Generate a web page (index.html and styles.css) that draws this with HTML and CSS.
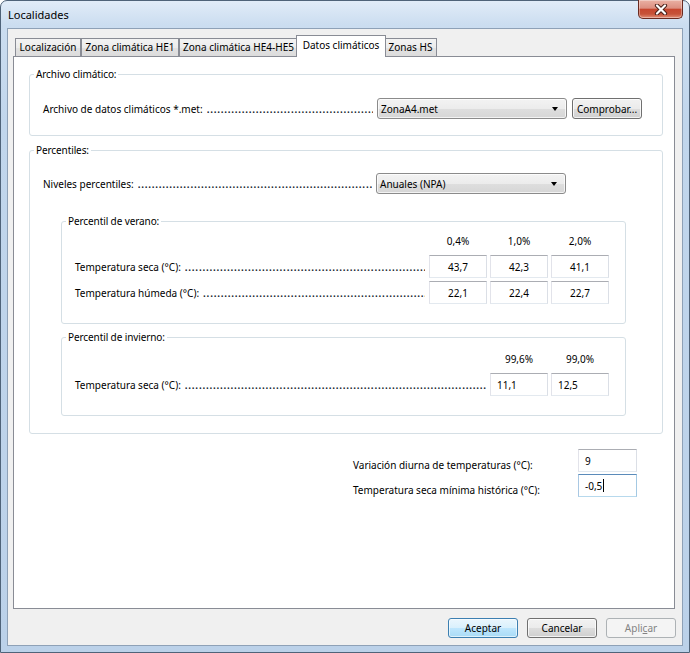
FILE: index.html
```html
<!DOCTYPE html>
<html lang="es">
<head>
<meta charset="utf-8">
<title>Localidades</title>
<link rel="stylesheet" href="styles.css">
</head>
<body>
<div class="window">
  <div class="titlebar">
    <span class="title">Localidades</span>
    <div class="close">
      <svg width="14" height="11" viewBox="0 0 14 11"><path d="M3 1.5 L11 9.5 M11 1.5 L3 9.5" stroke="#4a2019" stroke-width="4.2" stroke-linecap="round"/><path d="M3 1.5 L11 9.5 M11 1.5 L3 9.5" stroke="#ffffff" stroke-width="2.2" stroke-linecap="round"/></svg>
    </div>
  </div>
  <div class="client">
    <div class="tabs">
      <div class="tab t1">Localización</div>
      <div class="tab t2">Zona climática HE1</div>
      <div class="tab t3">Zona climática HE4-HE5</div>
      <div class="tab active t4">Datos climáticos</div>
      <div class="tab t5">Zonas HS</div>
    </div>
    <div class="panel">
      <fieldset class="group g-file">
        <legend>Archivo climático:</legend>
        <div class="group-body">
          <div class="row">
            <span class="label">Archivo de datos climáticos *.met:</span>
            <span class="leader"></span>
            <div class="combo"><span>ZonaA4.met</span><span class="arrow"></span></div>
            <div class="btn btn-check">Comprobar...</div>
          </div>
        </div>
      </fieldset>

      <fieldset class="group g-perc">
        <legend>Percentiles:</legend>
        <div class="group-body">
          <div class="row row-levels">
            <span class="label">Niveles percentiles:</span>
            <span class="leader"></span>
            <div class="combo"><span>Anuales (NPA)</span><span class="arrow"></span></div>
          </div>

          <fieldset class="subgroup sg-verano">
            <legend>Percentil de verano:</legend>
            <div class="sg-body">
              <span class="head c2">0,4%</span>
              <span class="head c3">1,0%</span>
              <span class="head c4">2,0%</span>
              <div class="cell-label c1"><span class="label">Temperatura seca (°C):</span><span class="leader"></span></div>
              <div class="field center">43,7</div>
              <div class="field center">42,3</div>
              <div class="field center">41,1</div>
              <div class="cell-label c1"><span class="label">Temperatura húmeda (°C):</span><span class="leader"></span></div>
              <div class="field center">22,1</div>
              <div class="field center">22,4</div>
              <div class="field center">22,7</div>
            </div>
          </fieldset>

          <fieldset class="subgroup sg-invierno">
            <legend>Percentil de invierno:</legend>
            <div class="sg-body">
              <span class="head c3">99,6%</span>
              <span class="head c4">99,0%</span>
              <div class="cell-label c12"><span class="label">Temperatura seca (°C):</span><span class="leader"></span></div>
              <div class="field left">11,1</div>
              <div class="field left">12,5</div>
            </div>
          </fieldset>
        </div>
      </fieldset>

      <div class="extra">
        <span class="extra-label">Variación diurna de temperaturas (°C):</span>
        <div class="field left wide">9</div>
        <span class="extra-label">Temperatura seca mínima histórica (°C):</span>
        <div class="field left wide focused">-0,5<span class="caret"></span></div>
      </div>
    </div>
    <div class="buttons">
      <div class="btn btn-default">Aceptar</div>
      <div class="btn">Cancelar</div>
      <div class="btn btn-disabled">Apli<u>c</u>ar</div>
    </div>
  </div>
</div>
</body>
</html>
```

FILE: styles.css
```css
* { box-sizing: border-box; }
html, body { margin: 0; padding: 0; }
body {
  width: 690px;
  height: 653px;
  overflow: hidden;
  font-family: "Noto Sans", "DejaVu Sans", sans-serif;
  font-size: 10px;
  color: #000;
  background: #ffffff;
}

.window {
  width: 690px;
  height: 653px;
  border: 1px solid #4f6379;
  border-radius: 7px 7px 0 0;
  background: linear-gradient(180deg, #e1ecf8 0, #cbddf0 24px, #c1d6ec 120px, #bbd1e9 100%);
  display: flex;
  flex-direction: column;
}

.titlebar {
  height: 27px;
  flex: none;
  display: flex;
  justify-content: space-between;
  align-items: flex-start;
  padding-left: 7px;
}
.title {
  font-size: 11px;
  line-height: 27px;
  color: #000;
}
.close {
  width: 45px;
  height: 19px;
  margin-right: 6px;
  margin-top: -1px;
  border: 1px solid #6a2a20;
  border-top: none;
  border-radius: 0 0 5px 5px;
  background: linear-gradient(180deg, #eab1a4 0, #dc8f80 45%, #c7472f 52%, #c65238 78%, #e28f77 100%);
  box-shadow: inset 0 0 0 1px rgba(255, 255, 255, 0.35);
  display: flex;
  align-items: center;
  justify-content: center;
}

.client {
  margin: 0 6px;
  height: 618px;
  flex: none;
  border: 1px solid #8ea1b7;
  background: #f0f0f0;
  display: flex;
  flex-direction: column;
}

.tabs {
  display: flex;
  align-items: flex-end;
  height: 21px;
  margin: 6px 0 0 5px;
  padding-left: 2px;
  flex: none;
}
.tab {
  height: 18px;
  line-height: 17px;
  text-align: center;
  white-space: nowrap;
  border: 1px solid #898c95;
  border-bottom: none;
  background: linear-gradient(180deg, #f3f3f3 0, #ececec 50%, #e2e2e2 51%, #dcdcdc 100%);
  color: #000;
}
.t1 { width: 66px; }
.t2 { width: 98px; }
.t3 { width: 119px; }
.t4 { width: 90px; }
.t5 { width: 53px; }
.tab.active {
  height: 22px;
  line-height: 19px;
  margin: 0 -2px -1px -2px;
  background: #ffffff;
  position: relative;
  z-index: 1;
}

.panel {
  height: 553px;
  flex: none;
  margin: 0 7px 0 5px;
  border: 1px solid #898c95;
  background: #ffffff;
  padding: 10px 11px 0 15px;
}

.group, .subgroup {
  margin: 0;
  padding: 0;
  min-width: 0;
  border: 1px solid #d5dfe5;
  border-radius: 3px;
}
.group legend, .subgroup legend {
  margin-left: 4px;
  padding: 0 2px;
  line-height: 14px;
  font-size: 10px;
  color: #000;
  letter-spacing: -0.1px;
}
.group-body {
  padding: 17px 20px 16px 13px;
}
.g-perc { margin-top: 7px; }
.g-perc > .group-body { padding: 16px 20px 17px 13px; }

.row {
  display: flex;
  align-items: center;
  height: 21px;
}
.row-levels { padding-right: 76px; }

.label { white-space: nowrap; }
.leader {
  flex: 1;
  min-width: 0;
  overflow: hidden;
  white-space: nowrap;
  margin: 0 4px 0 4px;
  font-weight: 600;
  letter-spacing: 0.75px;
  color: #10182a;
}
.leader::after {
  content: "............................................................................................................................................................................................................................";
}

.combo {
  width: 190px;
  height: 21px;
  flex: none;
  display: flex;
  align-items: center;
  justify-content: space-between;
  padding: 0 8px 0 3px;
  border: 1px solid #8b8b8b;
  border-radius: 3px;
  background: linear-gradient(180deg, #f3f3f3 0, #ececec 50%, #dedede 51%, #d6d6d6 100%);
  box-shadow: inset 0 0 0 1px rgba(255, 255, 255, 0.7);
}
.arrow {
  width: 0;
  height: 0;
  border-left: 3.5px solid transparent;
  border-right: 3.5px solid transparent;
  border-top: 4px solid #000;
}

.btn {
  width: 70px;
  height: 21px;
  flex: none;
  display: flex;
  align-items: center;
  justify-content: center;
  white-space: nowrap;
  border: 1px solid #707070;
  border-radius: 3px;
  background: linear-gradient(180deg, #f2f2f2 0, #ebebeb 50%, #dddddd 51%, #cfcfcf 100%);
  box-shadow: inset 0 0 0 1px rgba(255, 255, 255, 0.75);
  color: #000;
}
.btn-check { margin-left: 5px; }
.btn-default {
  border-color: #3c7fb1;
  background: linear-gradient(180deg, #eaf6fd 0, #d9f0fc 50%, #bee6fd 51%, #a9dbf6 100%);
  box-shadow: inset 0 0 0 1px rgba(255, 255, 255, 0.6);
}
.btn-disabled {
  border-color: #adb2b5;
  background: #f4f4f4;
  box-shadow: none;
  color: #838383;
}
.btn-disabled u { text-decoration-color: #838383; }

.subgroup { width: 565px; margin-left: 18px; }
.sg-verano { margin-top: 20px; }
.sg-invierno { margin-top: 6px; }
.sg-body {
  display: grid;
  grid-template-columns: 1fr 58px 58px 58px;
  column-gap: 3px;
  row-gap: 3px;
  padding: 6px 16px 19px 13px;
}
.sg-invierno .sg-body { padding-top: 8px; }
.head {
  line-height: 14px;
  margin-bottom: 4px;
  text-align: center;
}
.c1 { grid-column: 1; }
.c2 { grid-column: 2; }
.c3 { grid-column: 3; }
.c4 { grid-column: 4; }
.c12 { grid-column: 1 / span 2; }
.cell-label {
  display: flex;
  align-items: center;
  min-width: 0;
}
.cell-label .leader { margin-right: 1px; }

.field {
  height: 23px;
  display: flex;
  align-items: center;
  background: #ffffff;
  border: 1px solid;
  border-color: #abadb3 #dbdfe6 #e3e9ef #e2e3ea;
  white-space: nowrap;
}
.field.center { justify-content: center; }
.field.left { padding-left: 6px; }
.field.focused { border-color: #5b8bba #a4c9e3 #b7d9ed #a9c8e3; }
.caret {
  display: inline-block;
  width: 1px;
  height: 13px;
  background: #000;
  margin-left: 1px;
}

.extra {
  display: grid;
  grid-template-columns: 225px 59px;
  row-gap: 2px;
  margin: 15px 0 0 324px;
}
.extra-label {
  line-height: 14px;
  padding-top: 9px;
  white-space: nowrap;
}

.buttons {
  display: flex;
  justify-content: flex-end;
  gap: 9px;
  margin: 9px 6px 0 0;
  flex: none;
}
.buttons .btn { height: 20px; }
```
